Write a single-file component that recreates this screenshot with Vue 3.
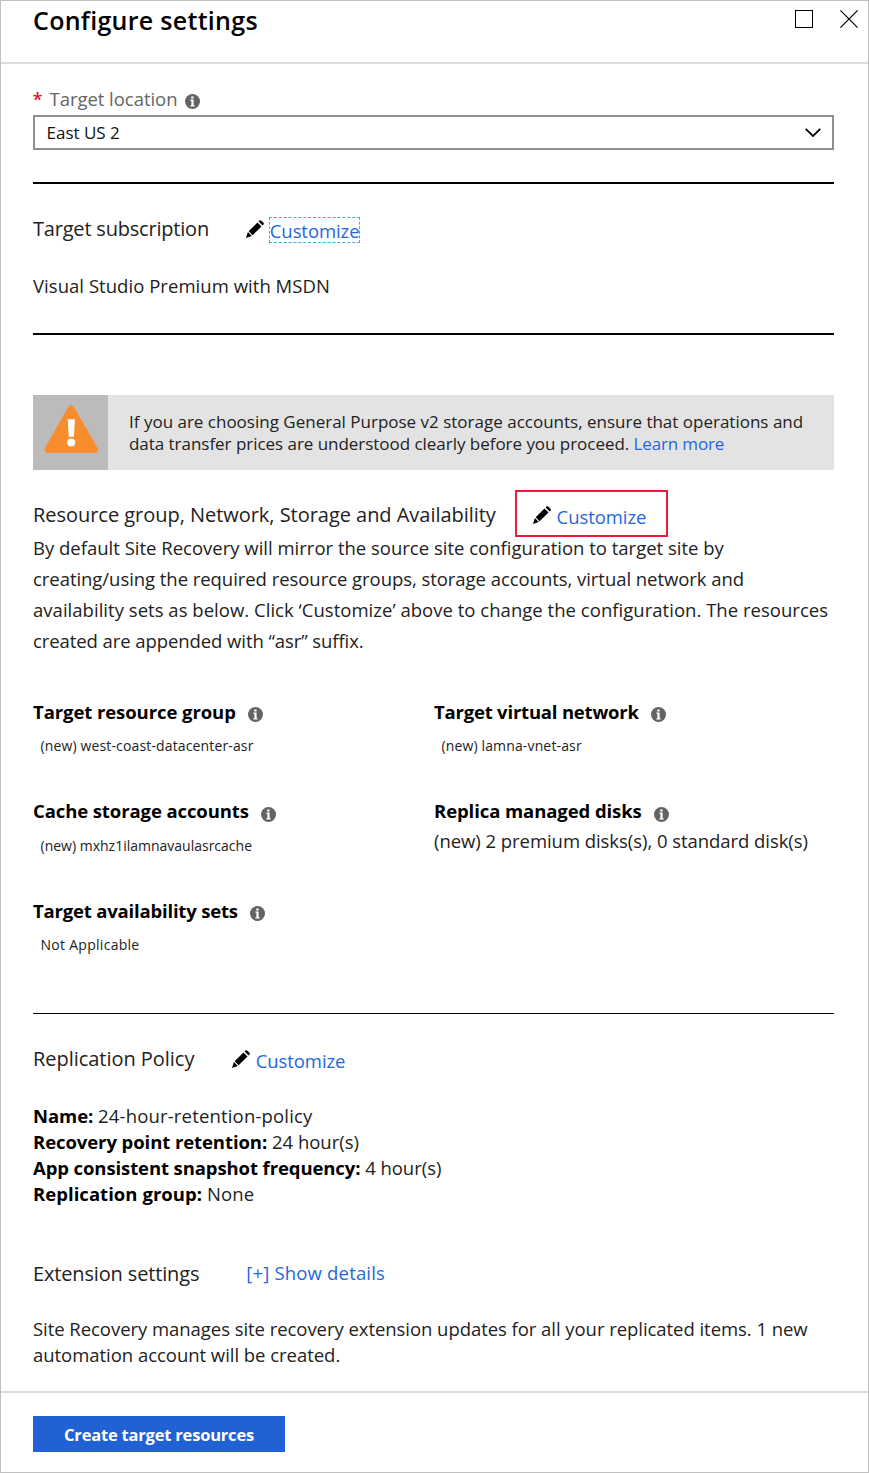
<script setup>
import { h } from 'vue'

const InfoIcon = () =>
  h('svg', { class: 'info', width: 15, height: 15, viewBox: '0 0 15 15' }, [
    h('circle', { cx: 7.5, cy: 7.5, r: 7.5, fill: '#636363' }),
    h('path', { d: 'M6.2 2.6h2.4v1.9H6.2zM5.4 5.6h3.2v5.7h1v1.1H5.4v-1.1h1V6.7h-1z', fill: '#fff' }),
  ])
const PencilIcon = () =>
  h('svg', { class: 'pencil', width: 18, height: 18, viewBox: '0 0 18 18' }, [
    h('path', {
      d: 'M12.6 1.4 13.4.6Q14.4-.3 15.4.7L17.3 2.6Q18.3 3.7 17.4 4.7L16.6 5.5zM11.5 2.5 15.5 6.5 6.6 15.2 2.7 11.3zM1.9 12.1 5.8 16 0 18z',
    }),
  ])
</script>

<template>
  <main class="blade">
    <header class="top">
      <h1>Configure settings</h1>
      <div class="window">
        <svg width="18" height="18" viewBox="0 0 18 18"><rect x=".5" y=".5" width="17" height="17" fill="none" stroke="#000" /></svg>
        <svg width="18" height="18" viewBox="0 0 18 18"><path d="M.4.4 17.6 17.6M17.6.4.4 17.6" fill="none" stroke="#000" stroke-width="1.2" /></svg>
      </div>
    </header>

    <div class="body">
      <div class="label"><b>*</b><span class="n04">Target location</span><InfoIcon /></div>
      <div class="select">
        <span>East US 2</span>
        <svg width="16" height="9" viewBox="0 0 16 9"><path d="M.7.8 8 8 15.3.8" fill="none" stroke="#000" stroke-width="1.8" /></svg>
      </div>
      <hr class="r1" />
      <div class="section s1">
        <h2 class="n20">Target subscription</h2>
        <a class="custom"><PencilIcon /><span class="link focus">Customize</span></a>
      </div>
      <p class="p04">Visual Studio Premium with MSDN</p>
      <hr class="r2" />

      <div class="warning">
        <div class="wicon">
          <svg width="55" height="49" viewBox="0 0 55 49">
            <path d="M27.2 4 50.5 44.5H4z" fill="#f78d2c" stroke="#f78d2c" stroke-width="7" stroke-linejoin="round" />
            <path d="M23.7 14.2h7.2l-1 17.6h-5.2z" fill="#fff" />
            <circle cx="27.2" cy="37.4" r="4" fill="#fff" />
          </svg>
        </div>
        <p>If you are choosing General Purpose v2 storage accounts, ensure that operations and<br /><span class="n04">data transfer prices are understood clearly before you proceed. </span><a class="link n15">Learn more</a></p>
      </div>

      <div class="section s2">
        <h2 class="n04">Resource group, Network, Storage and Availability</h2>
        <a class="custom boxed"><PencilIcon /><span class="link">Customize</span></a>
      </div>
      <p class="intro">
        <span>By default Site Recovery will mirror the source site configuration to target site by</span><br />
        <span class="n05">creating/using the required resource groups, storage accounts, virtual network and</span><br />
        <span class="p03">availability sets as below. Click ‘Customize’ above to change the configuration. The resources</span><br />
        <span class="n07">created are appended with “asr” suffix.</span>
      </p>

      <div class="targets">
        <div><h3><span class="n07">Target resource group</span><InfoIcon /></h3><p class="small p14">(new) west-coast-datacenter-asr</p></div>
        <div><h3><span class="n20">Target virtual network</span><InfoIcon /></h3><p class="small p14">(new) lamna-vnet-asr</p></div>
        <div class="second"><h3><span class="n10">Cache storage accounts</span><InfoIcon /></h3><p class="small lower">(new) mxhz1ilamnavaulasrcache</p></div>
        <div class="second"><h3><span class="n07">Replica managed disks</span><InfoIcon /></h3><p class="large n05">(new) 2 premium disks(s), 0 standard disk(s)</p></div>
        <div><h3><span class="n19">Target availability sets</span><InfoIcon /></h3><p class="small p28">Not Applicable</p></div>
      </div>
      <hr class="r3" />

      <div class="section s3">
        <h2 class="n04">Replication Policy</h2>
        <a class="custom"><PencilIcon /><span class="link">Customize</span></a>
      </div>
      <div class="policy">
        <p><b>Name:</b> <span class="p17">24-hour-retention-policy</span></p>
        <p><b>Recovery point retention:</b> <span>24 hour(s)</span></p>
        <p><b class="n10">App consistent snapshot frequency:</b> <span class="n04">4 hour(s)</span></p>
        <p><b class="p04">Replication group:</b> <span class="p17">None</span></p>
      </div>

      <div class="section s4">
        <h2 class="n15">Extension settings</h2>
        <a class="link show">[+] Show details</a>
      </div>
      <p class="ext"><span class="n05">Site Recovery manages site recovery extension updates for all your replicated items. 1 new</span><br /><span class="n04">automation account will be created.</span></p>
    </div>

    <footer><button>Create target resources</button></footer>
  </main>
</template>

<style>
body { background: #fff; }
</style>
<style scoped>
.blade { box-sizing: border-box; width: 869px; height: 1473px; border: 1px solid #bfbfbf; font: 18.5px/26px "Open Sans", sans-serif; color: #222; white-space: nowrap; display: flex; flex-direction: column; }
h1, h2, h3, p { margin: 0; font-weight: 400; }
.top { flex: none; height: 61px; border-bottom: 2px solid #dcdcdc; display: flex; justify-content: space-between; padding: 0 10px 0 32px; }
h1 { font-size: 25px; line-height: 34px; font-weight: 600; color: #000; margin-top: 2px; letter-spacing: .29px; }
.window { display: flex; gap: 27px; padding-top: 9px; }
.body { flex: none; box-sizing: border-box; padding: 22px 34px 0 32px; height: 1327px; }
.label { display: flex; color: #666; height: 29px; }
.label b { color: #e0162b; width: 17px; font-weight: 600; margin-left: -.5px; }
.label .info { margin: 8px 0 0 7px; }
.select { box-sizing: border-box; height: 35px; border: 2px solid #8f8f8f; padding: 0 11.5px; display: flex; align-items: center; justify-content: space-between; font-size: 17px; color: #111; }
hr { margin: 0; border: 0; background: #000; height: 2px; }
.r1 { margin-top: 32px; }
.r2 { margin-top: 34px; }
.r3 { height: 1px; }
.section { display: flex; height: 26px; }
h2 { font-size: 20px; margin-top: 1px; }
.s1 { margin-top: 31px; margin-bottom: 32px; }
.custom { display: flex; }
.link { color: #2567dc; }
.custom .link { margin-top: 3px; letter-spacing: -.08px; }
.pencil { margin: 5px 5.5px 0 0; }
.s1 .custom { margin-left: 37.3px; }
.custom .focus { height: 24px; outline: 1px dashed #35b0e0; line-height: 26px; }
.warning { margin-top: 60px; height: 75px; background: #e3e3e3; display: flex; font-size: 17px; line-height: 22px; }
.wicon { width: 75px; background: #bbb; margin-right: 21px; display: flex; justify-content: center; padding: 10px 0 0 1px; box-sizing: border-box; }
.warning p { margin-top: 16px; }
.s2 { margin-top: 31px; }
.boxed { box-sizing: border-box; width: 153px; height: 47px; border: 2px solid #ee1c3a; margin: -11px 0 -10px 19.3px; padding: 9px 0 0 16px; }
.intro { line-height: 31px; margin-top: 5px; }
.targets { display: grid; grid-template-columns: 401px 400px; grid-template-rows: 99px 100px 115px; margin-top: 43px; }
h3 { font-weight: 700; font-size: 18.5px; color: #000; display: flex; height: 26px; }
h3 .info { margin: 8px 0 0 12px; }
.second h3 .info { margin-top: 9px; }
.small { font-size: 14px; line-height: 22px; margin: 10px 0 0 7.5px; }
.lower { margin-top: 11px; }
.large { margin-top: 4px; }
.s3 { margin-top: 31px; }
.s3 .custom { margin-left: 37.8px; }
.policy { margin-top: 32px; }
.policy b { color: #000; letter-spacing: -.08px; }
.s4 { margin-top: 53px; }
.show { letter-spacing: .17px; margin-left: 47px; }
.ext { margin-top: 30px; }
footer { border-top: 2px solid #dcdcdc; padding: 23px 32px 0; }
button { width: 252px; height: 36px; border: 0; background: #2062d4; color: #fff; font: 700 16.5px/36px "Open Sans", sans-serif; letter-spacing: -.2px; padding: 1px 0 0; display: block; }
.n20 { letter-spacing: -.2px; }
.n19 { letter-spacing: -.185px; }
.n15 { letter-spacing: -.15px; }
.n10, .policy b.n10 { letter-spacing: -.1px; }
.n07 { letter-spacing: -.08px; }
.n05 { letter-spacing: -.05px; }
.n04 { letter-spacing: -.035px; }
.p03 { letter-spacing: .028px; }
.p04, .policy b.p04 { letter-spacing: .04px; }
.p14 { letter-spacing: .14px; }
.p17 { letter-spacing: .175px; }
.p28 { letter-spacing: .28px; }
</style>
